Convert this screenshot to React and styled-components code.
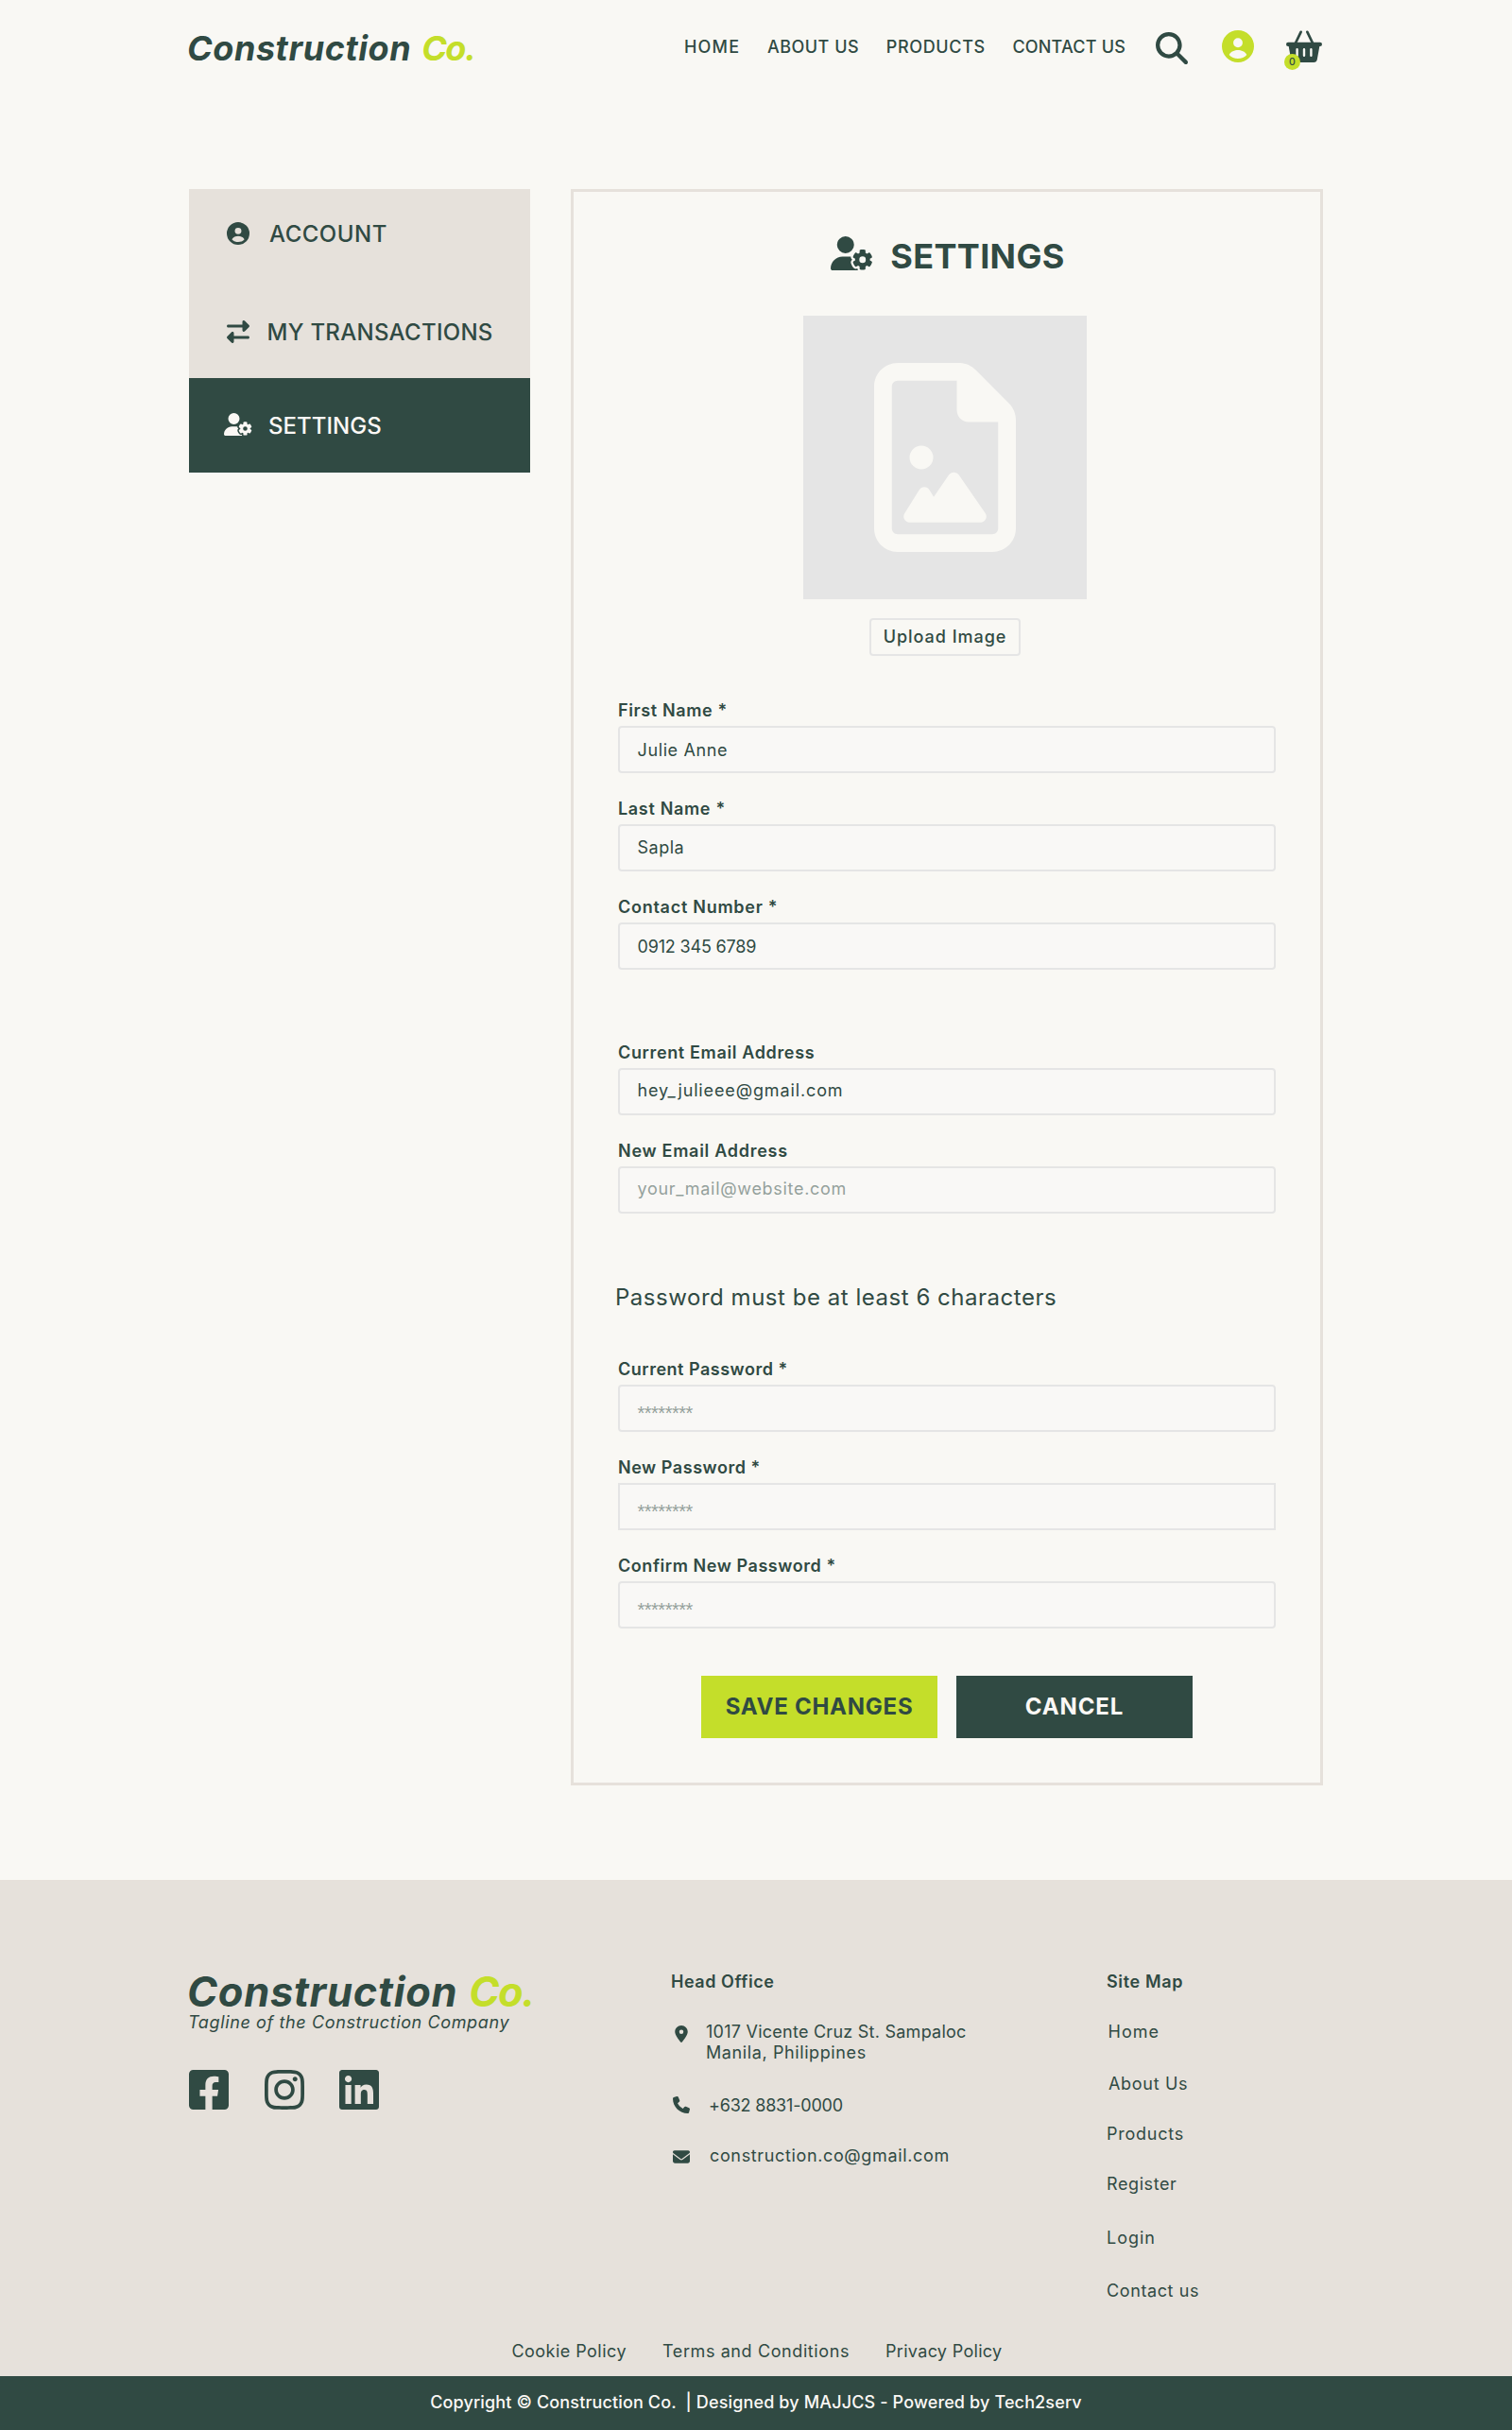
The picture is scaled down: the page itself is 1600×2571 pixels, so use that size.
import React from "react";
import styled, { createGlobalStyle } from "styled-components";
import { FaFacebookSquare, FaInstagram, FaLinkedin } from "react-icons/fa";
import {
  FaMagnifyingGlass,
  FaRightLeft,
  FaUserGear,
  FaRegFileImage,
  FaLocationDot,
  FaPhone,
  FaEnvelope,
} from "react-icons/fa6";

const color = {
  page: "#f9f8f4",
  beige: "#e6e1db",
  green: "#304a43",
  lime: "#c4de2a",
  gray: "#e5e5e5",
  field: "#f9f8f6",
  white: "#fbf8f5",
};

const GlobalStyle = createGlobalStyle`
  * { box-sizing: border-box; }
  body {
    margin: 0;
    background: ${color.page};
    color: ${color.green};
    font-family: Inter, "Liberation Sans", sans-serif;
    font-size: 18px;
    line-height: 22px;
  }
  svg { display: block; flex: none; }
`;

const Spaced = styled.span`
  letter-spacing: ${(p) => p.$ls}px;
  white-space: pre;
`;

/* Header */

const Header = styled.header`
  display: flex;
  align-items: center;
  height: 100px;
  padding: 0 200px;
`;

const Logo = styled.div`
  width: 525px;
  padding-top: 1px;
  font-size: 36px;
  line-height: 42px;
  font-weight: 700;
  font-style: italic;
  letter-spacing: 0.58px;
  margin-left: -2px;
  white-space: nowrap;
`;

const LogoAccent = styled.span`
  margin-left: ${(p) => p.$gap}px;
  color: ${color.lime};
  letter-spacing: -1.5px;
`;

const Nav = styled.nav`
  display: flex;
  gap: 28.6px;
  width: 500px;
  padding-left: 1px;
`;

const NavLink = styled(Spaced).attrs({ as: "a" })`
  font-weight: 500;
`;

const Actions = styled.div`
  display: flex;
  align-items: center;
  gap: 36px;
`;

const SearchIcon = styled(FaMagnifyingGlass)`
  width: 34px;
  height: 34px;
  margin-top: 2px;
`;

const AvatarSvg = styled.svg`
  width: ${(p) => p.$size}px;
  height: ${(p) => p.$size}px;
  margin-top: -2px;
  fill: ${(p) => p.$fill};
`;

const Cart = styled.div`
  position: relative;
  margin: -2px 0 0 -2px;
`;

const CartBadge = styled.span`
  position: absolute;
  left: -2px;
  top: 25px;
  width: 17px;
  height: 17px;
  border-radius: 50%;
  background: ${color.lime};
  font-size: 10.5px;
  font-weight: 500;
  line-height: 17px;
  text-align: center;
`;

/* Body */

const Main = styled.main`
  display: flex;
  align-items: flex-start;
  gap: 43px;
  padding: 100px 200px;
`;

const Sidebar = styled.aside`
  width: 361px;
  background: ${color.beige};
`;

const SideItem = styled.div`
  display: flex;
  align-items: center;
  height: ${(p) => p.$height}px;
  padding-top: ${(p) => p.$shift || 0}px;
  padding-left: 37px;
  font-size: 24px;
  line-height: 28px;
  font-weight: 500;
  background: ${(p) => (p.$active ? color.green : "transparent")};
  color: ${(p) => (p.$active ? color.white : color.green)};
`;

const SideIcon = styled.span`
  display: flex;
  justify-content: center;
  width: 30px;
  margin-right: ${(p) => p.$gap}px;
`;

const TransferIcon = styled(FaRightLeft)`
  width: 24px;
  height: 24px;
  margin-top: -1px;
`;

const UserGear = styled(FaUserGear)`
  width: ${(p) => p.$height * 1.25}px;
  height: ${(p) => p.$height}px;
  margin-top: ${(p) => -(p.$lift || 0)}px;
`;

const Panel = styled.section`
  display: flex;
  flex-direction: column;
  width: 796px;
  height: 1689px;
  padding: 47px;
  border: 3px solid ${color.beige};
`;

const PanelTitle = styled.h1`
  display: flex;
  justify-content: center;
  gap: 18px;
  height: 36px;
  margin: 0;
  padding-left: 2px;
  font-size: 36px;
  line-height: 43px;
  font-weight: 700;
`;

const Media = styled.div`
  display: flex;
  flex-direction: column;
  align-items: center;
  gap: 20px;
  width: 692px;
  margin-top: 48px;
`;

const Preview = styled.div`
  display: flex;
  align-items: center;
  justify-content: center;
  width: 300px;
  height: 300px;
  background: ${color.gray};
`;

const PreviewIcon = styled(FaRegFileImage)`
  width: 150px;
  height: 200px;
  color: ${color.page};
`;

const UploadButton = styled.button`
  width: 160px;
  height: 40px;
  padding: 0 0 1px;
  border: 2px solid ${color.gray};
  border-radius: 4px;
  background: ${color.page};
  color: inherit;
  font: inherit;
  font-weight: 500;
`;

const FieldGroup = styled.div`
  display: flex;
  flex-direction: column;
  gap: 26px;
  margin-top: ${(p) => p.$top}px;
`;

const Field = styled.div`
  display: flex;
  flex-direction: column;
  gap: 4px;
`;

const Label = styled(Spaced)`
  line-height: 24px;
  font-weight: 600;
`;

const Control = styled.div`
  display: flex;
  align-items: center;
  height: 50px;
  padding: ${(p) => (p.$drop > 0 ? p.$drop : 0)}px 18.5px ${(p) => (p.$drop < 0 ? -p.$drop : 0)}px;
  border: 2px solid ${color.gray};
  border-radius: ${(p) => (p.$square ? 0 : 4)}px;
  background: ${color.field};
`;

const Value = styled(Spaced)`
  opacity: ${(p) => (p.$muted ? 0.5 : 1)};
`;

const Mask = styled(Value)`
  font-family: "Liberation Sans", sans-serif;
  font-size: 20px;
`;

const Note = styled.p`
  margin: 74px 0 0 -3px;
  font-size: 24px;
  line-height: 30px;
  letter-spacing: 0.53px;
`;

const Buttons = styled.div`
  display: flex;
  justify-content: center;
  gap: 20px;
  margin-top: 50px;
`;

const Button = styled.button`
  width: 250px;
  height: 66px;
  padding: 0;
  border: 0;
  background: ${(p) => (p.$primary ? color.lime : color.green)};
  color: ${(p) => (p.$primary ? color.green : color.white)};
  font: inherit;
  font-size: 24px;
  font-weight: 700;
`;

/* Footer */

const Footer = styled.footer`
  background: ${color.beige};
`;

const FooterMain = styled.div`
  display: grid;
  grid-template-columns: 510px 461px 1fr;
  height: 488px;
  padding: 0 200px;
`;

const Brand = styled.div`
  padding-top: 94px;
`;

const FooterLogo = styled.div`
  margin-left: -2px;
  font-size: 43.4px;
  line-height: 48px;
  font-weight: 700;
  font-style: italic;
  letter-spacing: 0.73px;
  white-space: nowrap;
`;

const Tagline = styled.div`
  margin-left: -1px;
  line-height: 18px;
  font-style: italic;
  letter-spacing: 0.62px;
`;

const Socials = styled.div`
  display: flex;
  gap: 37.5px;
  margin-top: 38px;

  svg {
    width: 42px;
    height: 48px;
  }
`;

const FooterColumn = styled.div`
  display: flex;
  flex-direction: column;
  align-items: flex-start;
  padding-top: 97px;
`;

const FooterHeading = styled(Spaced)`
  margin-bottom: 31px;
  font-weight: 600;
`;

const Contact = styled.div`
  display: flex;
  margin-bottom: ${(p) => p.$after || 0}px;
`;

const ContactIcon = styled.span`
  display: flex;
  justify-content: center;
  width: 21px;
  padding-top: ${(p) => p.$drop}px;
  margin-right: ${(p) => p.$gap}px;

  svg {
    width: 18px;
    height: 18px;
  }
`;

const ContactLines = styled.div`
  display: flex;
  flex-direction: column;
`;

const MapLink = styled(Spaced).attrs({ as: "a" })`
  margin-left: ${(p) => p.$indent || 0}px;
  margin-bottom: ${(p) => p.$after || 0}px;
`;

const Policies = styled.div`
  display: flex;
  justify-content: center;
  gap: 38px;
  height: 37px;
  padding-left: 2px;
`;

const Copyright = styled.div`
  display: flex;
  align-items: center;
  justify-content: center;
  height: 57px;
  padding-bottom: 2px;
  background: ${color.green};
  color: ${color.white};
  font-weight: 500;
`;

function Avatar({ size, fill }) {
  return (
    <AvatarSvg viewBox="0 0 20 20" $size={size} $fill={fill}>
      <path
        fillRule="evenodd"
        d="M10 0a10 10 0 1 0 0 20a10 10 0 1 0 0-20zM10 4.9a2.9 2.9 0 1 1 0 5.8a2.9 2.9 0 1 1 0-5.8zM4.5 15.3C5.5 13.1 8 12.3 10 12.3S14.5 13.1 15.5 15.3C14.2 16.9 12.2 17.6 10 17.6S5.8 16.9 4.5 15.3z"
      />
    </AvatarSvg>
  );
}

function Basket() {
  return (
    <svg width="38" height="34" viewBox="0 0 38 34" fill={color.green}>
      <path
        d="M9.5 14.5L15.6 1.8M28.5 14.5L22.4 1.8"
        stroke={color.green}
        strokeWidth="2.7"
        strokeLinecap="round"
      />
      <rect x="0" y="12.8" width="38" height="4.3" rx="2.1" />
      <path
        fillRule="evenodd"
        d="M2.4 15.5H35.6L32.8 31Q32.2 34 29.2 34H8.8Q5.8 34 5.2 31ZM10.4 20.3v6.4a1.2 1.2 0 0 0 2.4 0v-6.4a1.2 1.2 0 0 0-2.4 0zM17.8 20.3v6.4a1.2 1.2 0 0 0 2.4 0v-6.4a1.2 1.2 0 0 0-2.4 0zM25.2 20.3v6.4a1.2 1.2 0 0 0 2.4 0v-6.4a1.2 1.2 0 0 0-2.4 0z"
      />
    </svg>
  );
}

const navLinks = [
  ["HOME", 1.2],
  ["ABOUT US", 0.5],
  ["PRODUCTS", 0.65],
  ["CONTACT US", 0.2],
];

const nameFields = [
  { label: "First Name *", ls: 0.63, value: "Julie Anne", vls: 0.62, drop: 1 },
  { label: "Last Name *", ls: 0.67, value: "Sapla", vls: 0.5 },
  { label: "Contact Number *", ls: 0.73, value: "0912 345 6789", vls: -0.17, drop: 1 },
];

const emailFields = [
  { label: "Current Email Address", ls: 0.64, value: "hey_julieee@gmail.com", vls: 0.87, drop: -3 },
  { label: "New Email Address", ls: 0.72, value: "your_mail@website.com", vls: 0.7, drop: -3, muted: true },
];

const passwordFields = [
  { label: "Current Password *", ls: 0.51 },
  { label: "New Password *", ls: 0.54, square: true },
  { label: "Confirm New Password *", ls: 0.56 },
];

const siteMap = [
  ["Home", 1, 33, 1.5],
  ["About Us", 0.7, 31, 2],
  ["Products", 0.75, 31, 0],
  ["Register", 0.6, 35, 0],
  ["Login", 1, 34, 0],
  ["Contact us", 0.6, 0, 0],
];

function Fields({ items, top }) {
  return (
    <FieldGroup $top={top}>
      {items.map((f) => (
        <Field key={f.label}>
          <Label $ls={f.ls}>{f.label}</Label>
          <Control $drop={f.value ? f.drop || 0 : 9} $square={f.square}>
            {f.value ? (
              <Value $ls={f.vls} $muted={f.muted}>
                {f.value}
              </Value>
            ) : (
              <Mask $ls={-0.5} $muted>
                ********
              </Mask>
            )}
          </Control>
        </Field>
      ))}
    </FieldGroup>
  );
}

export default function App() {
  return (
    <>
      <GlobalStyle />
      <Header>
        <Logo>
          Construction<LogoAccent $gap={11}>Co.</LogoAccent>
        </Logo>
        <Nav>
          {navLinks.map(([text, ls]) => (
            <NavLink key={text} $ls={ls}>
              {text}
            </NavLink>
          ))}
        </Nav>
        <Actions>
          <SearchIcon />
          <Avatar size={34} fill={color.lime} />
          <Cart>
            <Basket />
            <CartBadge>0</CartBadge>
          </Cart>
        </Actions>
      </Header>

      <Main>
        <Sidebar>
          <SideItem $height={95}>
            <SideIcon $gap={18}>
              <Avatar size={24} fill={color.green} />
            </SideIcon>
            <Spaced $ls={0.5}>ACCOUNT</Spaced>
          </SideItem>
          <SideItem $height={105} $shift={8}>
            <SideIcon $gap={15.5}>
              <TransferIcon />
            </SideIcon>
            <Spaced $ls={0.29}>MY TRANSACTIONS</Spaced>
          </SideItem>
          <SideItem $height={100} $shift={1} $active>
            <SideIcon $gap={17}>
              <UserGear $height={24} $lift={4} />
            </SideIcon>
            <Spaced $ls={0.03}>SETTINGS</Spaced>
          </SideItem>
        </Sidebar>

        <Panel>
          <PanelTitle>
            <UserGear $height={36} />
            <Spaced $ls={0.33}>SETTINGS</Spaced>
          </PanelTitle>
          <Media>
            <Preview>
              <PreviewIcon />
            </Preview>
            <UploadButton>
              <Spaced $ls={0.97}>Upload Image</Spaced>
            </UploadButton>
          </Media>
          <Fields items={nameFields} top={46} />
          <Fields items={emailFields} top={76} />
          <Note>Password must be at least 6 characters</Note>
          <Fields items={passwordFields} top={49} />
          <Buttons>
            <Button $primary>
              <Spaced $ls={0.75}>SAVE CHANGES</Spaced>
            </Button>
            <Button>
              <Spaced $ls={0.9}>CANCEL</Spaced>
            </Button>
          </Buttons>
        </Panel>
      </Main>

      <Footer>
        <FooterMain>
          <Brand>
            <FooterLogo>
              Construction<LogoAccent $gap={12}>Co.</LogoAccent>
            </FooterLogo>
            <Tagline>Tagline of the Construction Company</Tagline>
            <Socials>
              <FaFacebookSquare />
              <FaInstagram />
              <FaLinkedin />
            </Socials>
          </Brand>
          <FooterColumn>
            <FooterHeading $ls={0.55}>Head Office</FooterHeading>
            <Contact $after={34}>
              <ContactIcon $drop={4} $gap={16}>
                <FaLocationDot />
              </ContactIcon>
              <ContactLines>
                <Spaced $ls={0.25}>1017 Vicente Cruz St. Sampaloc</Spaced>
                <Spaced $ls={0.6}>Manila, Philippines</Spaced>
              </ContactLines>
            </Contact>
            <Contact $after={31}>
              <ContactIcon $drop={1} $gap={19}>
                <FaPhone />
              </ContactIcon>
              <Spaced $ls={-0.2}>+632 8831-0000</Spaced>
            </Contact>
            <Contact>
              <ContactIcon $drop={3} $gap={20}>
                <FaEnvelope />
              </ContactIcon>
              <Spaced $ls={0.64}>construction.co@gmail.com</Spaced>
            </Contact>
          </FooterColumn>
          <FooterColumn>
            <FooterHeading $ls={0.65}>Site Map</FooterHeading>
            {siteMap.map(([text, ls, after, indent]) => (
              <MapLink key={text} $ls={ls} $after={after} $indent={indent}>
                {text}
              </MapLink>
            ))}
          </FooterColumn>
        </FooterMain>
        <Policies>
          <Spaced $ls={0.46}>Cookie Policy</Spaced>
          <Spaced $ls={0.6}>Terms and Conditions</Spaced>
          <Spaced $ls={0.31}>Privacy Policy</Spaced>
        </Policies>
        <Copyright>
          <Spaced $ls={0.14}>
            {"Copyright © Construction Co.  | Designed by MAJJCS - Powered by Tech2serv"}
          </Spaced>
        </Copyright>
      </Footer>
    </>
  );
}
